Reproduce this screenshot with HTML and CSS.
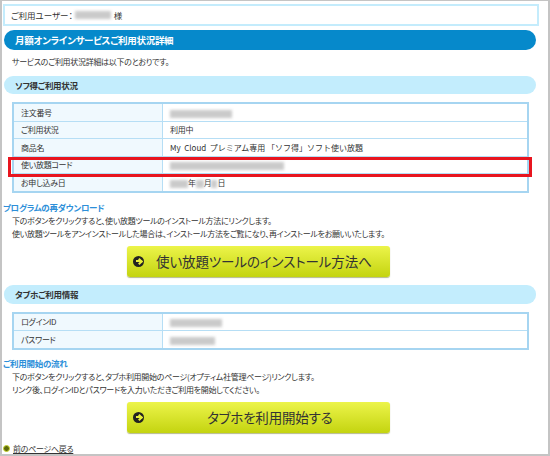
FILE: index.html
```html
<!DOCTYPE html>
<html lang="ja">
<head>
    <meta charset="UTF-8">
    <title>月額オンラインサービスご利用状況詳細</title>
    <link rel="stylesheet" href="styles.css">
</head>
<body>
    <div class="frame">
        <div class="user-box">ご利用ユーザー：<span class="blur w36"></span> 様</div>

        <h2 class="main-title">月額オンラインサービスご利用状況詳細</h2>
        <p class="lead">サービスのご利用状況詳細は以下のとおりです。</p>

        <h3 class="sub-title">ソフ得ご利用状況</h3>
        <div class="table-wrap">
            <table class="info-table">
                <tr><th>注文番号</th><td><span class="blur w62"></span></td></tr>
                <tr><th>ご利用状況</th><td>利用中</td></tr>
                <tr><th>商品名</th><td class="product">My&nbsp;&nbsp;Cloud&nbsp;&nbsp;プレミアム専用&nbsp;「ソフ得」ソフト使い放題</td></tr>
                <tr><th>使い放題コード</th><td><span class="blur w114"></span></td></tr>
                <tr><th>お申し込み日</th><td><span class="blur w18"></span>年<span class="blur w8"></span>月<span class="blur w6"></span>日</td></tr>
            </table>
            <div class="highlight"></div>
        </div>

        <h4 class="section-link">プログラムの再ダウンロード</h4>
        <p class="note">下のボタンをクリックすると、使い放題ツールのインストール方法にリンクします。<br>
        使い放題ツールをアンインストールした場合は、インストール方法をご覧になり、再インストールをお願いいたします。</p>
        <div class="btn-row">
            <a class="big-btn" href="#"><span class="arrow-icon"></span><span class="btn-label">使い放題ツールのインストール方法へ</span></a>
        </div>

        <h3 class="sub-title second">タブホご利用情報</h3>
        <table class="info-table">
            <tr><th>ログインID</th><td><span class="blur w52"></span></td></tr>
            <tr><th>パスワード</th><td><span class="blur w45"></span></td></tr>
        </table>

        <h4 class="section-link flow">ご利用開始の流れ</h4>
        <p class="note">下のボタンをクリックすると、タブホ利用開始のページ(オプティム社管理ページ)リンクします。<br>
        リンク後、ログインIDとパスワードを入力いただきご利用を開始してください。</p>
        <div class="btn-row">
            <a class="big-btn" href="#"><span class="arrow-icon"></span><span class="btn-label wide">タブホを利用開始する</span></a>
        </div>

        <a class="back-link" href="#"><span class="back-icon"></span><span class="back-text">前のページへ戻る</span></a>
    </div>
</body>
</html>
```

FILE: styles.css
```css
body {
    margin: 0;
    font-family: "Noto Sans CJK JP", "Liberation Sans", sans-serif;
    font-feature-settings: "palt";
    color: #333;
    font-size: 8px;
    letter-spacing: -0.3px;
    background: #fff;
}
.frame {
    width: 550px;
    height: 456px;
    box-sizing: border-box;
    border: 2px solid #c4c4c4;
    border-top-width: 1px;
    padding: 3px 9px 0 1px;
    overflow: hidden;
}
.user-box {
    height: 22px;
    box-sizing: border-box;
    border: 2px solid #c4ecfc;
    padding-left: 6px;
    display: flex;
    align-items: center;
    font-size: 8.5px;
    letter-spacing: 0;
}
.blur {
    display: inline-block;
    height: 8px;
    background: #cacaca;
    filter: blur(1.5px);
    vertical-align: middle;
}
.w6 { width: 6px; }
.w8 { width: 8px; }
.w18 { width: 18px; }
.w36 { width: 36px; margin: 0 3px 0 2px; }
.w45 { width: 45px; }
.w52 { width: 52px; }
.w62 { width: 62px; }
.w114 { width: 114px; }
.main-title {
    margin: 4px 3px 0 1px;
    height: 20px;
    line-height: 20px;
    border-radius: 10px;
    background: #0689cb;
    color: #fff;
    font-size: 9.5px;
    font-weight: bold;
    padding-left: 11px;
}
.lead {
    margin: 6px 0 0 9px;
    line-height: 12px;
}
.sub-title {
    margin: 8px 3px 0 1px;
    height: 18px;
    line-height: 18px;
    border-radius: 9px;
    background: #c3edfd;
    font-size: 8.5px;
    font-weight: bold;
    padding-left: 11px;
}
.sub-title.second {
    height: 19px;
    line-height: 19px;
}
.table-wrap {
    position: relative;
}
.info-table {
    margin: 8px 0 0 9px;
    width: 517px;
    border-collapse: collapse;
    border: 2px solid #a6d5f1;
}
.info-table th,
.info-table td {
    height: 16.5px;
    padding: 0 0 0 7px;
    border: 1px solid #b6def5;
    font-weight: normal;
    text-align: left;
}
.info-table th {
    width: 141px;
    background: #f0f9fe;
}
.info-table td.product {
    font-feature-settings: normal;
    letter-spacing: 0;
}
.highlight {
    position: absolute;
    left: 5px;
    top: 55px;
    width: 518px;
    height: 14px;
    border: 3px solid #e8151f;
}
.section-link {
    margin: 8px 0 0 0;
    font-size: 8.5px;
    font-weight: bold;
    color: #2d8fd9;
    line-height: 12px;
}
.section-link.flow {
    margin-top: 7px;
}
.note {
    margin: 1px 0 0 9px;
    line-height: 13px;
}
.btn-row {
    margin: 6px 0 0 124px;
}
.big-btn {
    width: 263px;
    height: 31px;
    box-sizing: border-box;
    display: flex;
    align-items: center;
    border-radius: 3px;
    background: linear-gradient(#ecf44a, #c4d410);
    box-shadow: 0 1px 1px rgba(90, 100, 0, 0.45);
    text-decoration: none;
    color: #333;
    padding-left: 6px;
}
.arrow-icon {
    position: relative;
    width: 11px;
    height: 11px;
    border-radius: 50%;
    background: #222;
    margin-right: 12px;
}
.arrow-icon::before {
    content: "";
    position: absolute;
    left: 2.5px;
    top: 4.5px;
    width: 5px;
    height: 2px;
    background: #e8ef3a;
}
.arrow-icon::after {
    content: "";
    position: absolute;
    left: 4px;
    top: 3px;
    width: 3px;
    height: 3px;
    border-top: 2px solid #e8ef3a;
    border-right: 2px solid #e8ef3a;
    transform: rotate(45deg);
}
.btn-label {
    font-size: 13.5px;
    letter-spacing: -0.1px;
}
.btn-label.wide {
    margin-left: 51px;
    letter-spacing: -0.2px;
}
.back-link {
    display: flex;
    align-items: center;
    margin-top: 10px;
    color: #333;
    text-decoration: none;
    line-height: 11px;
}
.back-icon {
    width: 5px;
    height: 5px;
    border-radius: 50%;
    background: #5d6a0c;
    border: 1px solid #c9d630;
    margin-right: 3px;
}
.back-text {
    text-decoration: underline;
}
```
